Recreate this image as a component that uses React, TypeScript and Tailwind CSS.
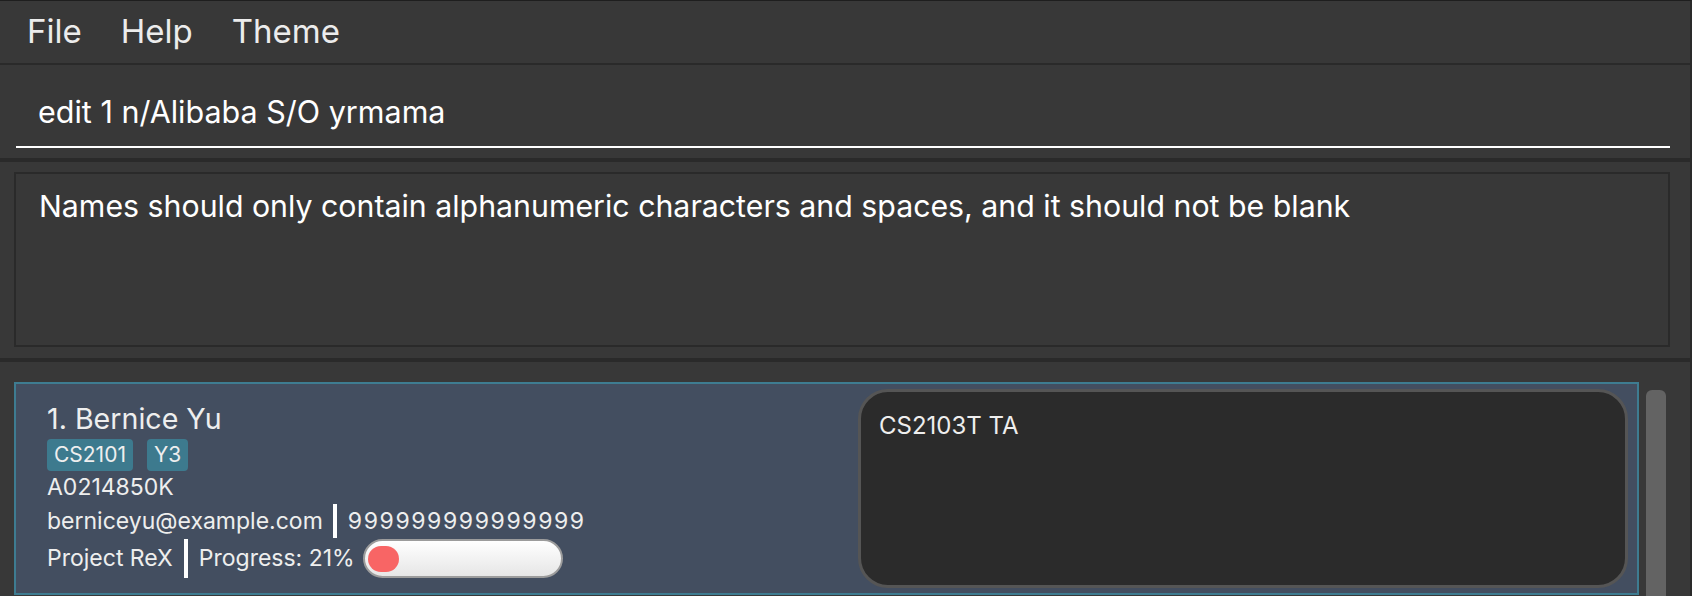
import React from 'react';

const Divider = ({ h }: { h: string }) => <div className={`w-1 bg-white shrink-0 ${h}`} />;

export default function App() {
  return (
    <div className="w-[1692px] h-[596px] overflow-hidden bg-[#383838] border-t border-t-[#1e1e1e] border-r-2 border-r-[#2a2a2a] font-['Inter',sans-serif] text-white flex flex-col">
      {/* Menu bar */}
      <div className="h-[62px] shrink-0 flex items-center gap-[39px] pl-[27px] text-[33px] text-[#ececec]">
        <span>File</span>
        <span>Help</span>
        <span>Theme</span>
      </div>
      <div className="h-[2px] shrink-0 bg-[#2a2a2a]" />

      {/* Command box */}
      <div className="h-[93px] shrink-0 pt-[23px] pl-4 pr-5">
        <div className="h-[60px] border-b-2 border-white pl-[22px] text-[30.5px] leading-[48px]">
          edit 1 n/Alibaba S/O yrmama
        </div>
      </div>
      <div className="h-[4px] shrink-0 bg-[#2a2a2a]" />

      {/* Result display */}
      <div className="h-[196px] shrink-0 pl-[14px] pr-5 pt-[10px] pb-[11px]">
        <div className="h-full border-2 border-[#2a2a2a] pl-[23px] pt-[12px] text-[30.3px] leading-[40px]">
          Names should only contain alphanumeric characters and spaces, and it should not be blank
        </div>
      </div>
      <div className="h-[4px] shrink-0 bg-[#2a2a2a]" />

      {/* Person list */}
      <div className="flex-1 flex pl-[14px] pt-[20px]">
        <div className="w-[1625px] h-[213px] shrink-0 flex items-center border-2 border-[#3e7c91] bg-[#434e60] text-[#eeeeee]">
          <div className="flex-1 self-start pl-[31px] pt-[16px] flex flex-col">
            <div className="h-[39px] flex items-center text-[28.6px]">1. Bernice Yu</div>
            <div className="h-[32px] flex gap-[14px]">
              <span className="h-[32px] px-[7px] rounded bg-[#3d7a8e] flex items-center text-[21px]">CS2101</span>
              <span className="h-[32px] px-[7px] rounded bg-[#3d7a8e] flex items-center text-[21px]">Y3</span>
            </div>
            <div className="h-[33px] flex items-center text-[23px]">A0214850K</div>
            <div className="h-[34px] flex items-center text-[23px]">
              <span>berniceyu@example.com</span>
              <span className="ml-[10px] mr-[11px] flex"><Divider h="h-[34px]" /></span>
              <span className="tracking-[1.6px]">999999999999999</span>
            </div>
            <div className="h-[39px] mt-[1px] flex items-center text-[23px]">
              <span>Project ReX</span>
              <span className="mx-[11px] flex"><Divider h="h-[39px]" /></span>
              <span className="w-[153px] shrink-0 whitespace-nowrap">Progress: 21%</span>
              <div className="ml-[11px] w-[200px] h-[39px] shrink-0 rounded-full border-2 border-[#9c9c9c] bg-linear-to-b from-white to-[#e6e6e6] flex items-center pl-[3px]">
                <div className="w-[31px] h-[26px] rounded-full bg-[#f86565]" />
              </div>
            </div>
          </div>
          <div className="w-[770px] h-[199px] mr-[9px] shrink-0 rounded-[30px] border-[3px] border-[#555555] bg-[#2b2b2b] pl-[18px] pt-[17px] text-[24px] leading-[34px] text-[#eeeeee]">
            CS2103T TA
          </div>
        </div>
        <div className="ml-[7px] mt-[8px] w-5 h-[300px] rounded-md bg-[#636363]" />
      </div>
    </div>
  );
}
